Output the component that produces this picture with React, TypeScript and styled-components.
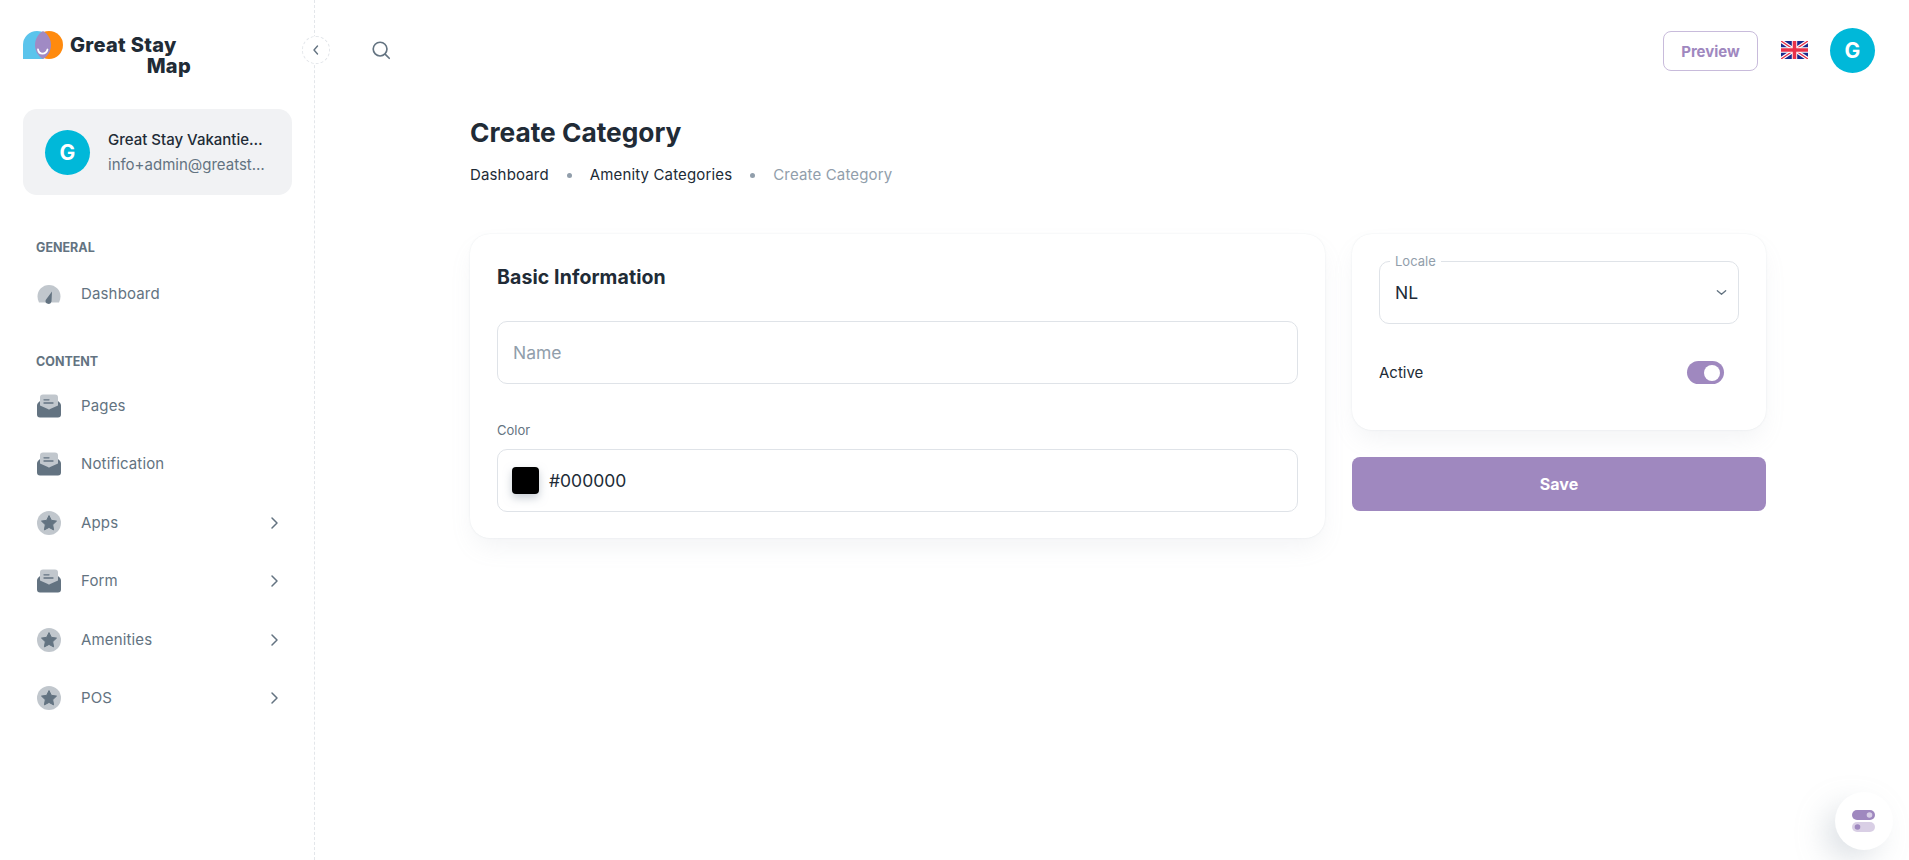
import styled, { createGlobalStyle } from "styled-components";

const GlobalStyle = createGlobalStyle`
  * { box-sizing: border-box; }
  html, body { margin: 0; padding: 0; background: #fff; }
  body { font-family: "Inter", "Liberation Sans", sans-serif; color: #212b36; overflow: hidden; }
`;

const Page = styled.div`
  display: flex;
  height: 860px;
`;

const Sidebar = styled.aside`
  position: relative;
  width: 315px;
  flex-shrink: 0;
  border-right: 1px dashed #e3e6ea;
  padding: 31px 22px 0 23px;
`;

const CollapseButton = styled.button`
  position: absolute;
  top: 36px;
  right: -16px;
  width: 28px;
  height: 28px;
  padding: 0;
  border: 1px dashed #e3e6ea;
  border-radius: 50%;
  background: #fff;
  color: #637381;
  display: flex;
  align-items: center;
  justify-content: center;
`;

const Logo = styled.div`
  display: flex;
  align-items: flex-start;
  height: 47px;
`;

const LogoText = styled.div`
  margin: 4px 0 0 7px;
  width: 121px;
  font-family: "Inter", sans-serif;
  font-size: 20px;
  font-weight: 800;
  line-height: 21px;
  letter-spacing: 0.3px;
  color: #212b36;
  span { display: block; text-align: right; }
  span:first-child { text-align: left; white-space: nowrap; }
`;

const UserCard = styled.div`
  margin-top: 31px;
  height: 86px;
  border-radius: 14px;
  background: #f1f2f4;
  display: flex;
  align-items: center;
  padding: 0 22px;
  gap: 18px;
`;

const Avatar = styled.div`
  width: 45px;
  height: 45px;
  flex-shrink: 0;
  border-radius: 50%;
  background: #00b8d9;
  color: #fff;
  font-size: 21px;
  font-weight: 700;
  display: flex;
  align-items: center;
  justify-content: center;
`;

const UserText = styled.div`
  min-width: 0;
  flex: 1;
`;

const UserName = styled.div`
  font-size: 15px;
  font-weight: 500;
  line-height: 22px;
  margin-bottom: 3px;
  white-space: nowrap;
  overflow: hidden;
  text-overflow: ellipsis;
`;

const UserMail = styled.div`
  font-size: 15px;
  line-height: 22px;
  color: #637381;
  white-space: nowrap;
  overflow: hidden;
  text-overflow: ellipsis;
`;

const NavHeading = styled.div<{ $top: number }>`
  margin-top: ${(p) => p.$top}px;
  padding-left: 13px;
  font-size: 12.5px;
  font-weight: 700;
  line-height: 18px;
  color: #637381;
  text-transform: uppercase;
`;

const NavList = styled.nav<{ $top: number }>`
  margin-top: ${(p) => p.$top}px;
  display: flex;
  flex-direction: column;
`;

const NavItem = styled.a`
  height: 58.5px;
  display: flex;
  align-items: center;
  padding-left: 14px;
  color: #637381;
  font-size: 15px;
  line-height: 22px;
  letter-spacing: 0.15px;
`;

const NavIcon = styled.svg`
  width: 24px;
  height: 24px;
  flex-shrink: 0;
  margin-right: 20px;
`;

const NavLabel = styled.span`
  flex: 1;
`;

const NavArrow = styled.svg`
  width: 16px;
  height: 16px;
  margin-left: auto;
  margin-right: 10px;
  color: #637381;
`;

const Main = styled.main`
  flex: 1;
  min-width: 0;
`;

const Header = styled.header`
  height: 100px;
  display: flex;
  align-items: center;
  justify-content: space-between;
  padding: 0 34px 0 55px;
`;

const SearchIcon = styled.svg`
  width: 22px;
  height: 22px;
  color: #637381;
`;

const HeaderActions = styled.div`
  display: flex;
  align-items: center;
`;

const PreviewButton = styled.button`
  width: 95px;
  height: 40px;
  margin-top: 2px;
  border: 1px solid #c8bbdb;
  border-radius: 8px;
  background: #fff;
  color: #9f88bf;
  font-family: inherit;
  font-size: 15px;
  font-weight: 700;
  margin-right: 23px;
`;

const Flag = styled.svg`
  width: 27px;
  height: 18px;
  margin-right: 22px;
`;

const Content = styled.div`
  width: 1296px;
  margin-left: 155px;
`;

const Title = styled.h1`
  margin: 15px 0 0;
  font-size: 26.3px;
  font-weight: 700;
  line-height: 36px;
`;

const Breadcrumbs = styled.div`
  margin-top: 12px;
  display: flex;
  align-items: center;
  font-size: 15px;
  line-height: 24px;
  letter-spacing: 0.15px;
`;

const Dot = styled.i`
  width: 5px;
  height: 5px;
  border-radius: 50%;
  background: #919eab;
  margin: 0 18px;
`;

const Crumb = styled.span<{ $muted?: boolean }>`
  color: ${(p) => (p.$muted ? "#919eab" : "#212b36")};
`;

const Columns = styled.div`
  margin-top: 47px;
  display: grid;
  grid-template-columns: 855px 414px;
  gap: 27px;
  align-items: start;
`;

const Card = styled.section`
  background: #fff;
  border-radius: 20px;
  box-shadow: 0 0 2px rgba(145, 158, 171, 0.2), 0 12px 24px -4px rgba(145, 158, 171, 0.12);
`;

const BasicCard = styled(Card)`
  height: 304px;
  padding: 29px 27px 0;
`;

const SectionTitle = styled.h2`
  margin: 0;
  font-size: 19.5px;
  font-weight: 700;
  line-height: 28px;
  letter-spacing: 0.1px;
`;

const TextBox = styled.div`
  height: 63px;
  border: 1px solid #dfe3e8;
  border-radius: 10px;
  display: flex;
  align-items: center;
  padding: 0 15px;
  font-size: 17.5px;
`;

const NameBox = styled(TextBox)`
  margin-top: 30px;
  color: #919eab;
`;

const ColorBox = styled(TextBox)`
  padding: 0 14px;
`;

const FieldLabel = styled.div`
  margin-top: 37px;
  margin-bottom: 10px;
  font-size: 13px;
  line-height: 18px;
  color: #637381;
`;

const Swatch = styled.div`
  width: 27px;
  height: 27px;
  border-radius: 4px;
  background: #000;
  box-shadow: 0 4px 8px rgba(145, 158, 171, 0.5);
  margin-right: 10px;
`;

const SideColumn = styled.div`
  display: flex;
  flex-direction: column;
  gap: 27px;
`;

const SideCard = styled(Card)`
  height: 196px;
  padding: 27px 27px 0;
`;

const SelectBox = styled(TextBox)`
  position: relative;
  justify-content: space-between;
  padding: 0 10px 0 15px;
  color: #212b36;
`;

const FloatingLabel = styled.span`
  position: absolute;
  top: -9px;
  left: 10px;
  padding: 0 5px;
  background: #fff;
  font-size: 13px;
  line-height: 16px;
  color: #919eab;
`;

const Chevron = styled.svg`
  width: 13px;
  height: 13px;
  color: #637381;
`;

const ActiveRow = styled.div`
  margin-top: 37px;
  padding-right: 15px;
  display: flex;
  align-items: center;
  justify-content: space-between;
  font-size: 15px;
`;

const Toggle = styled.div`
  width: 37px;
  height: 23px;
  border-radius: 12px;
  background: #9f88bf;
  display: flex;
  align-items: center;
  justify-content: flex-end;
  padding-right: 4px;
`;

const ToggleThumb = styled.div`
  width: 16px;
  height: 16px;
  border-radius: 50%;
  background: #fff;
`;

const SaveButton = styled.button`
  height: 54px;
  border: none;
  border-radius: 8px;
  background: #9f88bf;
  color: #fff;
  font-family: inherit;
  font-size: 16px;
  font-weight: 700;
`;

const SettingsFab = styled.button`
  position: fixed;
  right: 16px;
  bottom: 10px;
  width: 58px;
  height: 58px;
  padding: 0;
  border: none;
  border-radius: 50%;
  background: #fff;
  box-shadow: -12px 12px 32px -4px rgba(145, 158, 171, 0.36);
  display: flex;
  align-items: center;
  justify-content: center;
`;

const GaugeIcon = () => (
  <NavIcon viewBox="0 0 24 24">
    <path d="M12 3A11.500 11.500 0 0 0 .5 14.500c0 2 .5 4 1.500 6h20c1-2 1.500-4 1.500-6A11.500 11.500 0 0 0 12 3z" fill="#637381" opacity=".4" />
    <path d="M15 9.500l-.5 10a3 3 0 1 1-5.800-1.500z" fill="#637381" />
  </NavIcon>
);

const MailIcon = () => (
  <NavIcon viewBox="0 0 24 24">
    <rect x="3" y="0.500" width="18" height="15" rx="3" fill="#637381" opacity=".4" />
    <path d="M7 5.800h5M7 9h9" stroke="#637381" strokeWidth="1.300" strokeLinecap="round" />
    <path d="M3 7L.9 9Q0 10 0 11.500V20.500a3 3 0 0 0 3 3H21a3 3 0 0 0 3-3V11.500Q24 10 23.100 9L21 7v4.500l-9 4-9-4z" fill="#637381" />
  </NavIcon>
);

const StarIcon = () => (
  <NavIcon viewBox="0 0 24 24">
    <circle cx="12" cy="12" r="12" fill="#637381" opacity=".4" />
    <path d="M12 4.600l2.300 4.700 5.200.8-3.800 3.600.9 5.200-4.600-2.500-4.600 2.500.9-5.200-3.800-3.600 5.200-.8z" fill="#637381" stroke="#637381" strokeLinejoin="round" />
  </NavIcon>
);

const Arrow = () => (
  <NavArrow viewBox="0 0 16 16" fill="none" stroke="currentColor" strokeWidth="1.500" strokeLinecap="round" strokeLinejoin="round">
    <path d="M6 3l5 5-5 5" />
  </NavArrow>
);

const menu = [
  { label: "Pages", icon: <MailIcon /> },
  { label: "Notification", icon: <MailIcon /> },
  { label: "Apps", icon: <StarIcon />, more: true },
  { label: "Form", icon: <MailIcon />, more: true },
  { label: "Amenities", icon: <StarIcon />, more: true },
  { label: "POS", icon: <StarIcon />, more: true },
];

export default function App() {
  return (
    <Page>
      <GlobalStyle />
      <Sidebar>
        <CollapseButton>
          <svg width="14" height="14" viewBox="0 0 14 14" fill="none" stroke="currentColor" strokeWidth="1.400" strokeLinecap="round" strokeLinejoin="round">
            <path d="M8.500 3L5 7l3.500 4" />
          </svg>
        </CollapseButton>
        <Logo>
          <svg width="40" height="28" viewBox="0 0 40 28">
            <circle cx="26" cy="14" r="14" fill="#ff8a0d" />
            <path d="M0 28V14A14 14 0 0 1 14 0c6 0 10 3 12 8 1 6 0 16-6 20z" fill="#5bc4ec" />
            <path d="M20 0c5 3 8 8 8 14 0 6-3 11-8 14-5-3-8-8-8-14 0-6 3-11 8-14z" fill="#a08ac4" />
            <path d="M15 18.500c1 5.500 8 5.500 9.500 0" fill="none" stroke="#fff" strokeWidth="1.800" strokeLinecap="round" />
          </svg>
          <LogoText>
            <span>Great Stay</span>
            <span>Map</span>
          </LogoText>
        </Logo>
        <UserCard>
          <Avatar>G</Avatar>
          <UserText>
            <UserName>Great Stay Vakantiehuizen</UserName>
            <UserMail>info+admin@greatstay.nl</UserMail>
          </UserText>
        </UserCard>
        <NavHeading $top={44}>General</NavHeading>
        <NavList $top={8}>
          <NavItem>
            <GaugeIcon />
            <NavLabel>Dashboard</NavLabel>
          </NavItem>
        </NavList>
        <NavHeading $top={29}>Content</NavHeading>
        <NavList $top={6}>
          {menu.map((item) => (
            <NavItem key={item.label}>
              {item.icon}
              <NavLabel>{item.label}</NavLabel>
              {item.more && <Arrow />}
            </NavItem>
          ))}
        </NavList>
      </Sidebar>
      <Main>
        <Header>
          <SearchIcon viewBox="0 0 24 24" fill="none" stroke="currentColor" strokeWidth="1.800" strokeLinecap="round">
            <circle cx="11" cy="11" r="7.500" />
            <path d="M17 17l4 4" />
          </SearchIcon>
          <HeaderActions>
            <PreviewButton>Preview</PreviewButton>
            <Flag viewBox="0 0 60 40">
              <rect width="60" height="40" fill="#1a2a8c" />
              <path d="M0 0l60 40M60 0L0 40" stroke="#fff" strokeWidth="8" />
              <path d="M0 0l60 40M60 0L0 40" stroke="#e8334a" strokeWidth="3" />
              <path d="M30 0v40M0 20h60" stroke="#fff" strokeWidth="12" />
              <path d="M30 0v40M0 20h60" stroke="#e8334a" strokeWidth="8" />
            </Flag>
            <Avatar>G</Avatar>
          </HeaderActions>
        </Header>
        <Content>
          <Title>Create Category</Title>
          <Breadcrumbs>
            <Crumb>Dashboard</Crumb>
            <Dot />
            <Crumb>Amenity Categories</Crumb>
            <Dot />
            <Crumb $muted>Create Category</Crumb>
          </Breadcrumbs>
          <Columns>
            <BasicCard>
              <SectionTitle>Basic Information</SectionTitle>
              <NameBox>Name</NameBox>
              <FieldLabel>Color</FieldLabel>
              <ColorBox>
                <Swatch />
                #000000
              </ColorBox>
            </BasicCard>
            <SideColumn>
              <SideCard>
                <SelectBox>
                  <FloatingLabel>Locale</FloatingLabel>
                  NL
                  <Chevron viewBox="0 0 14 14" fill="none" stroke="currentColor" strokeWidth="1.400" strokeLinecap="round" strokeLinejoin="round">
                    <path d="M2.500 5l4.500 4 4.500-4" />
                  </Chevron>
                </SelectBox>
                <ActiveRow>
                  Active
                  <Toggle>
                    <ToggleThumb />
                  </Toggle>
                </ActiveRow>
              </SideCard>
              <SaveButton>Save</SaveButton>
            </SideColumn>
          </Columns>
        </Content>
      </Main>
      <SettingsFab>
        <svg width="24" height="24" viewBox="0 0 24 24">
          <rect y="1" width="23" height="10" rx="5" fill="#9f88bf" />
          <circle cx="17.500" cy="6" r="2.800" fill="#d9cfe7" />
          <rect y="13" width="23" height="10" rx="5" fill="#9f88bf" opacity=".4" />
          <circle cx="5.500" cy="18" r="2.800" fill="#9f88bf" />
        </svg>
      </SettingsFab>
    </Page>
  );
}
